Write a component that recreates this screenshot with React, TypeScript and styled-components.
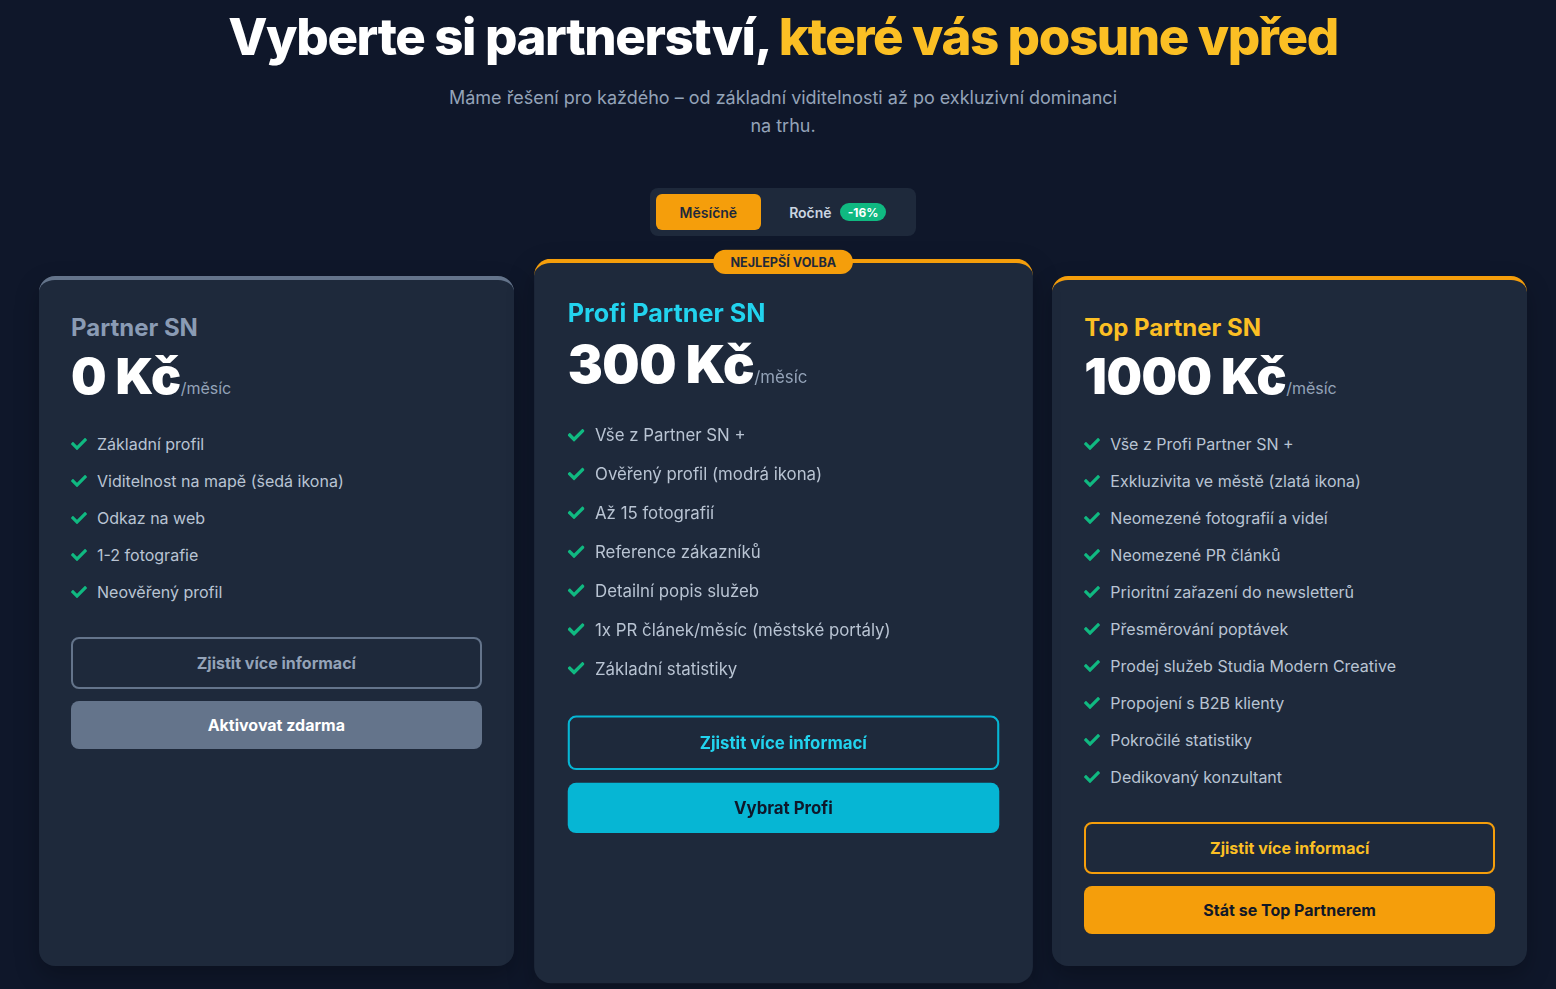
import React from "react";
import styled, { createGlobalStyle } from "styled-components";
import { FaCheck } from "react-icons/fa";

const Global = createGlobalStyle`
  html, body { margin: 0; padding: 0; background: #0f172a; }
  body { font-family: Inter, "Noto Sans", sans-serif; -webkit-font-smoothing: antialiased; }
  * { box-sizing: border-box; }
`;

type Tone = "gray" | "cyan" | "amber";

const tones = {
  gray: { top: "#64748b", title: "#8a9bb4", outline: "#64748b", outlineText: "#94a3b8", fill: "#64748b", fillText: "#ffffff" },
  cyan: { top: "#f59e0b", title: "#22d3ee", outline: "#06b6d4", outlineText: "#22d3ee", fill: "#06b6d4", fillText: "#0f172a" },
  amber: { top: "#f59e0b", title: "#fbbf24", outline: "#f59e0b", outlineText: "#fbbf24", fill: "#f59e0b", fillText: "#111827" },
};

const Page = styled.main`
  min-height: 989px;
  padding: 6px 29px 0 39px;
`;

const Header = styled.header`
  display: flex;
  flex-direction: column;
  align-items: center;
  text-align: center;
`;

const Title = styled.h1`
  margin: 0;
  font-size: 51px;
  line-height: 62px;
  font-weight: 800;
  color: #ffffff;
  letter-spacing: -1.4px;
  span { color: #fbbf24; }
`;

const Subtitle = styled.p`
  margin: 16px 0 0;
  max-width: 672px;
  font-size: 18px;
  line-height: 28px;
  color: #94a3b8;
`;

const ToggleRow = styled.div`
  display: flex;
  justify-content: center;
  margin-top: 48px;
`;

const Toggle = styled.div`
  display: flex;
  align-items: center;
  gap: 4px;
  padding: 6px;
  background: #1e293b;
  border-radius: 8px;
`;

const ToggleBtn = styled.button<{ $active?: boolean }>`
  display: flex;
  align-items: center;
  gap: 8px;
  height: 36px;
  padding: 0 24px;
  border: none;
  border-radius: 6px;
  font-family: inherit;
  font-size: 14px;
  font-weight: 600;
  background: ${(p) => (p.$active ? "#f59e0b" : "transparent")};
  color: ${(p) => (p.$active ? "#1e293b" : "#cbd5e1")};
  cursor: pointer;
`;

const Discount = styled.span`
  display: inline-flex;
  align-items: center;
  height: 18px;
  padding: 0 8px;
  border-radius: 999px;
  background: #10b981;
  color: #ffffff;
  font-size: 12px;
  font-weight: 700;
`;

const Grid = styled.div`
  display: grid;
  grid-template-columns: repeat(3, 1fr);
  gap: 32px;
  margin-top: 40px;
`;

const Card = styled.section<{ $tone: Tone; $featured?: boolean }>`
  position: relative;
  display: flex;
  flex-direction: column;
  padding: 32px;
  background: #1e293b;
  border-top: 4px solid ${(p) => tones[p.$tone].top};
  border-radius: 16px;
  box-shadow: 0 10px 25px rgba(0, 0, 0, 0.25);
  transform: ${(p) => (p.$featured ? "scale(1.05)" : "none")};
  z-index: ${(p) => (p.$featured ? 1 : 0)};
`;

const Badge = styled.div`
  position: absolute;
  top: -1px;
  left: 50%;
  transform: translate(-50%, -50%);
  padding: 4px 16px;
  border-radius: 999px;
  background: #f59e0b;
  color: #1e293b;
  font-size: 12px;
  line-height: 15px;
  font-weight: 700;
  white-space: nowrap;
`;

const PlanName = styled.h2<{ $tone: Tone }>`
  margin: 0 0 8px;
  font-size: 24px;
  line-height: 32px;
  font-weight: 700;
  color: ${(p) => tones[p.$tone].title};
`;

const PriceRow = styled.div`
  display: flex;
  align-items: baseline;
  margin-bottom: 32px;
`;

const Price = styled.span`
  font-size: 50px;
  line-height: 48px;
  font-weight: 900;
  color: #ffffff;
  letter-spacing: -0.5px;
`;

const Period = styled.span`
  font-size: 16px;
  color: #94a3b8;
`;

const Features = styled.ul`
  list-style: none;
  margin: 0;
  padding: 0;
  display: flex;
  flex-direction: column;
  gap: 13px;
`;

const Feature = styled.li`
  display: flex;
  align-items: center;
  gap: 10px;
  font-size: 16px;
  line-height: 24px;
  color: #b9c4d3;
  svg { flex-shrink: 0; color: #10b981; }
`;

const Actions = styled.div`
  display: flex;
  flex-direction: column;
  gap: 12px;
  margin-top: 33px;
`;

const OutlineBtn = styled.button<{ $tone: Tone }>`
  height: 52px;
  border-radius: 8px;
  border: 2px solid ${(p) => tones[p.$tone].outline};
  background: transparent;
  color: ${(p) => tones[p.$tone].outlineText};
  font-family: inherit;
  font-size: 16px;
  font-weight: 700;
  cursor: pointer;
`;

const FillBtn = styled.button<{ $tone: Tone }>`
  height: 48px;
  border-radius: 8px;
  border: none;
  background: ${(p) => tones[p.$tone].fill};
  color: ${(p) => tones[p.$tone].fillText};
  font-family: inherit;
  font-size: 16px;
  font-weight: 700;
  cursor: pointer;
`;

const plans: {
  tone: Tone;
  name: string;
  price: string;
  features: string[];
  cta: string;
  featured?: boolean;
}[] = [
  {
    tone: "gray",
    name: "Partner SN",
    price: "0 Kč",
    features: [
      "Základní profil",
      "Viditelnost na mapě (šedá ikona)",
      "Odkaz na web",
      "1-2 fotografie",
      "Neověřený profil",
    ],
    cta: "Aktivovat zdarma",
  },
  {
    tone: "cyan",
    name: "Profi Partner SN",
    price: "300 Kč",
    featured: true,
    features: [
      "Vše z Partner SN +",
      "Ověřený profil (modrá ikona)",
      "Až 15 fotografií",
      "Reference zákazníků",
      "Detailní popis služeb",
      "1x PR článek/měsíc (městské portály)",
      "Základní statistiky",
    ],
    cta: "Vybrat Profi",
  },
  {
    tone: "amber",
    name: "Top Partner SN",
    price: "1000 Kč",
    features: [
      "Vše z Profi Partner SN +",
      "Exkluzivita ve městě (zlatá ikona)",
      "Neomezené fotografií a videí",
      "Neomezené PR článků",
      "Prioritní zařazení do newsletterů",
      "Přesměrování poptávek",
      "Prodej služeb Studia Modern Creative",
      "Propojení s B2B klienty",
      "Pokročilé statistiky",
      "Dedikovaný konzultant",
    ],
    cta: "Stát se Top Partnerem",
  },
];

export default function App() {
  return (
    <>
      <Global />
      <Page>
        <Header>
          <Title>
            Vyberte si partnerství, <span>které vás posune vpřed</span>
          </Title>
          <Subtitle>
            Máme řešení pro každého – od základní viditelnosti až po exkluzivní dominanci na trhu.
          </Subtitle>
        </Header>
        <ToggleRow>
          <Toggle>
            <ToggleBtn $active>Měsíčně</ToggleBtn>
            <ToggleBtn>
              Ročně <Discount>-16%</Discount>
            </ToggleBtn>
          </Toggle>
        </ToggleRow>
        <Grid>
          {plans.map((p) => (
            <Card key={p.name} $tone={p.tone} $featured={p.featured}>
              {p.featured && <Badge>NEJLEPŠÍ VOLBA</Badge>}
              <PlanName $tone={p.tone}>{p.name}</PlanName>
              <PriceRow>
                <Price>{p.price}</Price>
                <Period>/měsíc</Period>
              </PriceRow>
              <Features>
                {p.features.map((f) => (
                  <Feature key={f}>
                    <FaCheck size={16} />
                    {f}
                  </Feature>
                ))}
              </Features>
              <Actions>
                <OutlineBtn $tone={p.tone}>Zjistit více informací</OutlineBtn>
                <FillBtn $tone={p.tone}>{p.cta}</FillBtn>
              </Actions>
            </Card>
          ))}
        </Grid>
      </Page>
    </>
  );
}
